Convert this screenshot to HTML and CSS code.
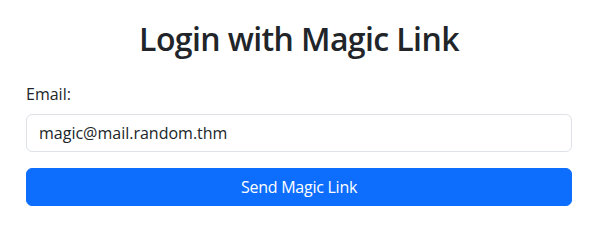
FILE: index.html
```html
<!DOCTYPE html>
<html lang="en">
<head>
<meta charset="utf-8">
<title>Login with Magic Link</title>
<link rel="stylesheet" href="styles.css">
</head>
<body>
<main class="container">
  <h2 class="title">Login with Magic Link</h2>
  <form class="form">
    <div class="field">
      <label class="form-label" for="email">Email:</label>
      <input class="form-control" id="email" type="email" value="magic@mail.random.thm">
    </div>
    <button class="btn-primary" type="button">Send Magic Link</button>
  </form>
</main>
</body>
</html>
```
FILE: styles.css
```css
* { box-sizing: border-box; }
html, body { margin: 0; padding: 0; background: #fff; }
body {
  font-family: "Open Sans", "Noto Sans", "Liberation Sans", sans-serif;
  font-size: 16px;
  line-height: 24px;
  color: #212529;
}
.container {
  padding: 20px 30px 0 26px;
}
.title {
  margin: 0 0 24px 0;
  font-size: 32px;
  line-height: 38px;
  font-weight: 600;
  text-align: center;
  letter-spacing: -0.6px;
}
.form { display: flex; flex-direction: column; }
.field { display: flex; flex-direction: column; margin-bottom: 16px; }
.form-label { margin-bottom: 8px; font-size: 16px; line-height: 24px; }
.form-control {
  display: block;
  width: 100%;
  height: 38px;
  padding: 6px 12px;
  font: inherit;
  color: #212529;
  background: #fff;
  border: 1px solid #dee2e6;
  border-radius: 6px;
  outline: none;
}
.btn-primary {
  display: block;
  width: 100%;
  height: 38px;
  padding: 6px 12px;
  font: inherit;
  letter-spacing: -0.25px;
  color: #fff;
  background: #0d6efd;
  border: 1px solid #0d6efd;
  border-radius: 6px;
  cursor: pointer;
}
```
